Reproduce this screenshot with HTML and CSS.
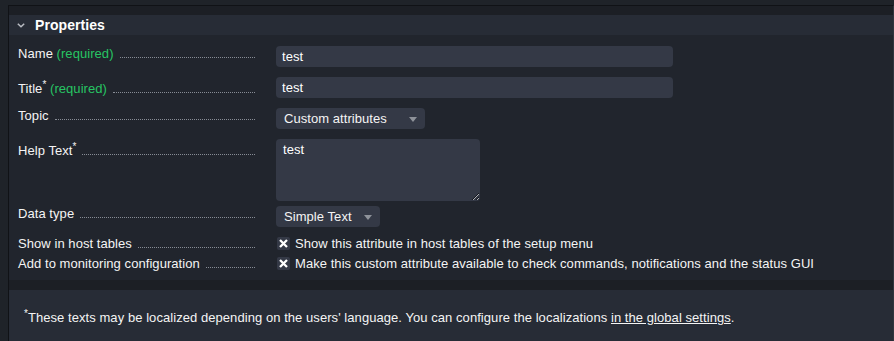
FILE: index.html
```html
<!DOCTYPE html>
<html lang="en">
<head>
	<meta charset="UTF-8">
	<title>Properties</title>
	<link rel="stylesheet" href="styles.css">
</head>
<body>
	<div class="page">
		<div class="section">
			<div class="head">
				<svg class="chev" width="8" height="5" viewBox="0 0 8 5"><path d="M0.8 0.8 L4 3.8 L7.2 0.8" fill="none" stroke="#b9bcc3" stroke-width="1.5"/></svg>
				<span>Properties</span>
			</div>
			<div class="body">
				<div class="row">
					<div class="lbl"><span class="txt">Name <em>(required)</em></span><span class="dots"></span></div>
					<div class="ctl"><input class="text" type="text" value="test"></div>
				</div>
				<div class="row">
					<div class="lbl"><span class="txt">Title<sup>*</sup> <em>(required)</em></span><span class="dots"></span></div>
					<div class="ctl"><input class="text" type="text" value="test"></div>
				</div>
				<div class="row">
					<div class="lbl"><span class="txt">Topic</span><span class="dots"></span></div>
					<div class="ctl"><span class="select topic">Custom attributes</span></div>
				</div>
				<div class="row tight">
					<div class="lbl"><span class="txt">Help Text<sup>*</sup></span><span class="dots"></span></div>
					<div class="ctl"><textarea class="area">test</textarea></div>
				</div>
				<div class="row before-check">
					<div class="lbl"><span class="txt">Data type</span><span class="dots"></span></div>
					<div class="ctl"><span class="select dtype">Simple Text</span></div>
				</div>
				<div class="row check">
					<div class="lbl"><span class="txt">Show in host tables</span><span class="dots"></span></div>
					<div class="ctl"><span class="box"><svg width="9" height="9" viewBox="0 0 9 9"><path d="M1 1 L8 8 M8 1 L1 8" stroke="#fff" stroke-width="2.3"/></svg></span>Show this attribute in host tables of the setup menu</div>
				</div>
				<div class="row check last">
					<div class="lbl"><span class="txt">Add to monitoring configuration</span><span class="dots"></span></div>
					<div class="ctl"><span class="box"><svg width="9" height="9" viewBox="0 0 9 9"><path d="M1 1 L8 8 M8 1 L1 8" stroke="#fff" stroke-width="2.3"/></svg></span>Make this custom attribute available to check commands, notifications and the status GUI</div>
				</div>
			</div>
		</div>
		<div class="foot">
			<sup>*</sup>These texts may be localized depending on the users' language. You can configure the localizations <a href="#">in the global settings</a>.
		</div>
	</div>
</body>
</html>
```

FILE: styles.css
```css
html,
body{
	margin: 0;
	padding: 0;
}
body{
	background-color: #1f2329;
	padding: 5px 0 0 8px;
	font-family: "Liberation Sans", Arial, sans-serif;
	font-size: 13px;
	letter-spacing: 0.06px;
	color: #f4f4f4;
}
.page{
	background-color: #1c1f25;
	border-top: 1px solid #101216;
	border-left: 1px solid #101216;
	border-right: 1px solid #30353e;
	padding-top: 9px;
	min-height: 340px;
}
.head{
	height: 20px;
	background-color: #272c36;
	display: flex;
	align-items: center;
	padding-left: 8px;
	font-size: 14px;
	font-weight: bold;
	color: #fff;
}
.chev{
	margin-right: 10px;
}
.body{
	background-color: #21252d;
	padding: 11px 0 9px;
}
.row{
	display: flex;
	align-items: flex-start;
	margin-bottom: 10px;
	line-height: 15px;
}
.row.tight{
	margin-bottom: 5px;
}
.row.before-check{
	margin-bottom: 9px;
}
.row.check{
	margin-bottom: 5px;
}
.row.last{
	margin-bottom: 0;
}
.lbl{
	width: 267px;
	box-sizing: border-box;
	padding: 0 21px 0 9px;
	display: flex;
	align-items: baseline;
	flex-shrink: 0;
}
.lbl em{
	font-style: normal;
	color: #27c463;
}
.lbl sup{
	font-size: 10px;
	vertical-align: 5px;
}
.dots{
	flex: 1;
	margin-left: 6px;
	border-bottom: 1px dotted #878c95;
}
.ctl{
	display: flex;
	align-items: flex-start;
}
.text{
	width: 397px;
	height: 21px;
	box-sizing: border-box;
	border: none;
	border-radius: 4px;
	background-color: #343946;
	color: #fff;
	font-family: "Liberation Sans", Arial, sans-serif;
	font-size: 13px;
	letter-spacing: 0.06px;
	padding: 0 6px;
	margin: 0;
	outline: none;
}
.select{
	height: 21px;
	line-height: 21px;
	box-sizing: border-box;
	border-radius: 4px;
	background-color: #343946;
	padding-left: 8px;
	position: relative;
}
.select::after{
	content: "";
	position: absolute;
	top: 9px;
	right: 8px;
	border-left: 4px solid transparent;
	border-right: 4px solid transparent;
	border-top: 5px solid #8e929a;
}
.topic{
	width: 149px;
}
.dtype{
	width: 104px;
}
.area{
	display: block;
	width: 204px;
	height: 62px;
	box-sizing: border-box;
	border: none;
	border-radius: 4px;
	background-color: #343946;
	color: #fff;
	font-family: "Liberation Sans", Arial, sans-serif;
	font-size: 13px;
	letter-spacing: 0.06px;
	padding: 3px 7px;
	margin: 0;
	outline: none;
}
.box{
	width: 13px;
	height: 13px;
	margin: 1px 5px 0 1px;
	background-color: #343946;
	border-radius: 2px;
	display: flex;
	align-items: center;
	justify-content: center;
	flex-shrink: 0;
}
.foot{
	margin-top: 10px;
	background-color: #272c36;
	padding: 20px 15px 30px;
	line-height: 15px;
}
.foot sup{
	font-size: 10px;
	line-height: 0;
}
.foot a{
	color: #f4f4f4;
}
```
